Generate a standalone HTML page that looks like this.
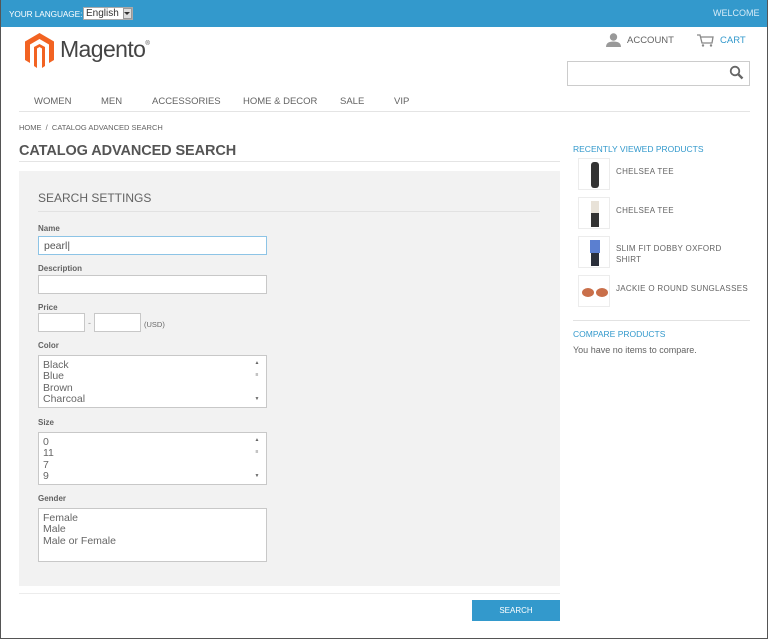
<!DOCTYPE html>
<html><head><meta charset="utf-8"><style>
*{margin:0;padding:0;box-sizing:border-box}
body{width:768px;height:639px;overflow:hidden;background:#fff;font-family:"Liberation Sans",sans-serif;position:relative;color:#636363}
.frame{position:absolute;left:0;top:0;width:768px;height:639px;border:1px solid #555;border-top:none;pointer-events:none}
.a{position:absolute;white-space:nowrap}
.top{position:absolute;left:0;top:0;width:768px;height:27px;background:#3399cc}
.inp{position:absolute;background:#fff;border:1px solid #c8c8c8}
.lbl{position:absolute;font-size:8px;font-weight:bold;color:#636363;left:38px}
.opt{font-size:10.5px;color:#666;line-height:11.3px}
.thumb{position:absolute;left:578px;width:32px;height:32px;border:1px solid #ececec;background:#fff}
.side{position:absolute;left:616px;font-size:8px;color:#636363;letter-spacing:.3px;line-height:11px}
.nav{position:absolute;top:96px;font-size:9.5px;color:#636363}
</style></head><body>
<div class="top"></div>
<div class="a" style="left:9px;top:9px;font-size:8.3px;color:#fff;letter-spacing:-.1px">YOUR LANGUAGE:</div>
<div class="a" style="left:83px;top:7px;width:50px;height:13px;background:#fff;border:1px solid #aaa;font-size:10px;line-height:11px;color:#333;padding-left:2px">English</div>
<div class="a" style="left:123px;top:8px;width:9px;height:11px;background:#ddd;border:1px solid #999"></div>
<div class="a" style="left:124px;top:12px;width:0;height:0;border-left:3.5px solid transparent;border-right:3.5px solid transparent;border-top:3px solid #333"></div>
<div class="a" style="left:713px;top:8px;font-size:9px;color:#d7ecf7">WELCOME</div>

<svg class="a" style="left:25px;top:33px" width="29" height="36" viewBox="0 0 29 36">
<path d="M14.5 0 L29 8.5 V27 L24 30 V11.5 L14.5 6 L5 11.5 V30 L0 27 V8.5 Z" fill="#f26322"/>
<path d="M9 14 L14.5 11 L20 14 V33 L17 35 V15.5 L14.5 14 L12 15.5 V35 L9 33 Z" fill="#f26322"/>
</svg>
<div class="a" style="left:60px;top:36px;font-size:23px;color:#444;letter-spacing:-.6px">Magento<sup style="font-size:6px;vertical-align:12px">®</sup></div>

<svg class="a" style="left:606px;top:33px" width="15" height="14" viewBox="0 0 15 14"><circle cx="7.5" cy="4" r="3.7" fill="#999"/><path d="M0 14 Q0 8.5 7.5 8.5 Q15 8.5 15 14Z" fill="#999"/></svg>
<div class="a" style="left:627px;top:35px;font-size:9.5px;color:#636363">ACCOUNT</div>
<svg class="a" style="left:697px;top:34px" width="17" height="13" viewBox="0 0 17 13"><path d="M0 1H3L5 9H15L16 3H4" fill="none" stroke="#888" stroke-width="1.3"/><circle cx="6" cy="11.5" r="1.2" fill="#888"/><circle cx="14" cy="11.5" r="1.2" fill="#888"/></svg>
<div class="a" style="left:720px;top:35px;font-size:9.5px;color:#3399cc">CART</div>
<div class="inp" style="left:567px;top:61px;width:183px;height:25px;border:1px solid #ccc"></div>
<svg class="a" style="left:729px;top:65px" width="15" height="15" viewBox="0 0 15 15"><circle cx="6" cy="6" r="4.3" fill="none" stroke="#666" stroke-width="1.8"/><path d="M9 9L13.5 13.5" stroke="#666" stroke-width="2.4"/></svg>

<div class="nav" style="left:34px">WOMEN</div>
<div class="nav" style="left:101px">MEN</div>
<div class="nav" style="left:152px">ACCESSORIES</div>
<div class="nav" style="left:243px">HOME &amp; DECOR</div>
<div class="nav" style="left:340px">SALE</div>
<div class="nav" style="left:394px">VIP</div>
<div class="a" style="left:19px;top:111px;width:731px;height:1px;background:#e4e4e4"></div>

<div class="a" style="left:19px;top:123px;font-size:7.5px;color:#636363">HOME &nbsp;/&nbsp; CATALOG ADVANCED SEARCH</div>
<div class="a" style="left:19px;top:143px;font-size:14.5px;color:#555;font-weight:bold;letter-spacing:-.1px">CATALOG ADVANCED SEARCH</div>
<div class="a" style="left:19px;top:161px;width:541px;height:1px;background:#e4e4e4"></div>

<div class="a" style="left:19px;top:171px;width:541px;height:415px;background:#f2f2f2"></div>
<div class="a" style="left:38px;top:191px;font-size:12px;color:#636363">SEARCH SETTINGS</div>
<div class="a" style="left:38px;top:211px;width:502px;height:1px;background:#e2e2e2"></div>

<div class="lbl" style="top:224px">Name</div>
<div class="inp" style="left:38px;top:236px;width:229px;height:19px;border-color:#8dc4e6;font-size:10.5px;padding:3px 5px;color:#555">pearl|</div>
<div class="lbl" style="top:264px">Description</div>
<div class="inp" style="left:38px;top:275px;width:229px;height:19px"></div>
<div class="lbl" style="top:303px">Price</div>
<div class="inp" style="left:38px;top:313px;width:47px;height:19px"></div>
<div class="a" style="left:88px;top:318px;font-size:9px;color:#999">-</div>
<div class="inp" style="left:94px;top:313px;width:47px;height:19px"></div>
<div class="a" style="left:144px;top:320px;font-size:7.5px;color:#666">(USD)</div>

<div class="lbl" style="top:341px">Color</div>
<div class="inp" style="left:38px;top:355px;width:229px;height:53px;padding:4px 4px"><div class="opt">Black<br>Blue<br>Brown<br>Charcoal</div></div>
<div class="a" style="left:252px;top:360px;width:10px;height:42px;font-size:5px;color:#666;text-align:center;line-height:6px">▲<br><br>≡<br><br><br><br>▼</div>
<div class="lbl" style="top:418px">Size</div>
<div class="inp" style="left:38px;top:432px;width:229px;height:53px;padding:4px 4px"><div class="opt">0<br>11<br>7<br>9</div></div>
<div class="a" style="left:252px;top:437px;width:10px;height:42px;font-size:5px;color:#666;text-align:center;line-height:6px">▲<br><br>≡<br><br><br><br>▼</div>
<div class="lbl" style="top:494px">Gender</div>
<div class="inp" style="left:38px;top:508px;width:229px;height:54px;padding:4px 4px"><div class="opt">Female<br>Male<br>Male or Female</div></div>

<div class="a" style="left:19px;top:593px;width:541px;height:1px;background:#ececec"></div>
<div class="a" style="left:472px;top:600px;width:88px;height:21px;background:#3399cc;color:#fff;font-size:8px;text-align:center;line-height:21px">SEARCH</div>

<div class="a" style="left:573px;top:144px;font-size:8.5px;color:#3399cc">RECENTLY VIEWED PRODUCTS</div>
<div class="thumb" style="top:158px"><div style="position:absolute;left:12px;top:3px;width:8px;height:26px;background:#333;border-radius:3px"></div></div>
<div class="side" style="top:166px">CHELSEA TEE</div>
<div class="thumb" style="top:197px"><div style="position:absolute;left:12px;top:3px;width:8px;height:12px;background:#e8e2d8"></div><div style="position:absolute;left:12px;top:15px;width:8px;height:14px;background:#333"></div></div>
<div class="side" style="top:205px">CHELSEA TEE</div>
<div class="thumb" style="top:236px"><div style="position:absolute;left:11px;top:3px;width:10px;height:13px;background:#5b7fd0"></div><div style="position:absolute;left:12px;top:16px;width:8px;height:13px;background:#2a2f3a"></div></div>
<div class="side" style="top:243px">SLIM FIT DOBBY OXFORD<br>SHIRT</div>
<div class="thumb" style="top:275px"><div style="position:absolute;left:3px;top:12px;width:12px;height:9px;border-radius:50%;background:#c96f4a"></div><div style="position:absolute;left:17px;top:12px;width:12px;height:9px;border-radius:50%;background:#c96f4a"></div></div>
<div class="side" style="top:283px">JACKIE O ROUND SUNGLASSES</div>
<div class="a" style="left:573px;top:320px;width:177px;height:1px;background:#e2e2e2"></div>
<div class="a" style="left:573px;top:329px;font-size:8.5px;color:#3399cc">COMPARE PRODUCTS</div>
<div class="a" style="left:573px;top:345px;font-size:9px;color:#636363">You have no items to compare.</div>
<div class="frame"></div>
</body></html>
